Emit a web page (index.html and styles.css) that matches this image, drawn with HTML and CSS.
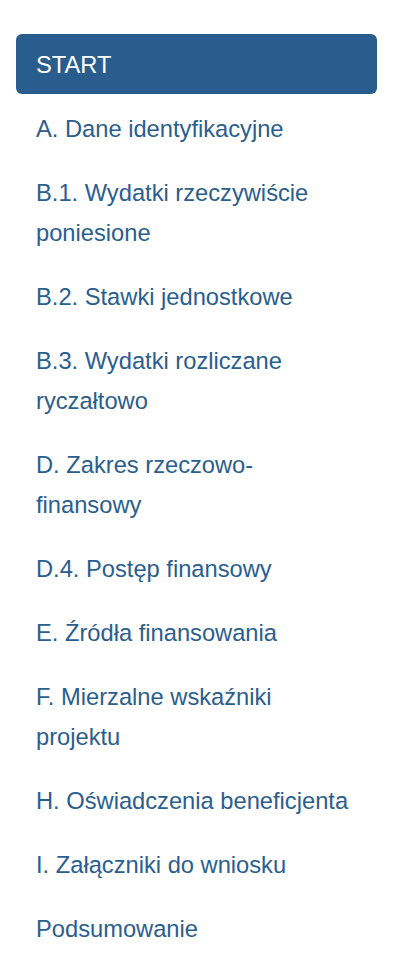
FILE: index.html
```html
<!DOCTYPE html>
<html lang="pl">
<head>
<meta charset="utf-8">
<title>Nawigacja wniosku</title>
<link rel="stylesheet" href="styles.css">
</head>
<body>
<nav class="sidebar">
  <ul class="nav-list">
    <li class="nav-item active"><a href="#">START</a></li>
    <li class="nav-item"><a href="#">A. Dane identyfikacyjne</a></li>
    <li class="nav-item"><a href="#">B.1. Wydatki rzeczywiście poniesione</a></li>
    <li class="nav-item"><a href="#">B.2. Stawki jednostkowe</a></li>
    <li class="nav-item"><a href="#">B.3. Wydatki rozliczane ryczałtowo</a></li>
    <li class="nav-item"><a href="#">D. Zakres rzeczowo-finansowy</a></li>
    <li class="nav-item"><a href="#">D.4. Postęp finansowy</a></li>
    <li class="nav-item"><a href="#">E. Źródła finansowania</a></li>
    <li class="nav-item"><a href="#">F. Mierzalne wskaźniki projektu</a></li>
    <li class="nav-item"><a href="#">H. Oświadczenia beneficjenta</a></li>
    <li class="nav-item"><a href="#">I. Załączniki do wniosku</a></li>
    <li class="nav-item"><a href="#">Podsumowanie</a></li>
  </ul>
</nav>
</body>
</html>
```

FILE: styles.css
```css
html, body {
  margin: 0;
  padding: 0;
  background: #ffffff;
}

body {
  font-family: "Liberation Sans", Arial, sans-serif;
}

.sidebar {
  padding: 34px 39px 0 16px;
}

.nav-list {
  list-style: none;
  margin: 0;
  padding: 0;
  display: flex;
  flex-direction: column;
  gap: 4px;
}

.nav-item a {
  display: block;
  padding: 11px 20px 9px;
  font-size: 23.7px;
  line-height: 40px;
  color: #2a5e8e;
  text-decoration: none;
  border-radius: 6px;
}

.nav-item.active a {
  background: #285d8e;
  color: #ffffff;
}
```
